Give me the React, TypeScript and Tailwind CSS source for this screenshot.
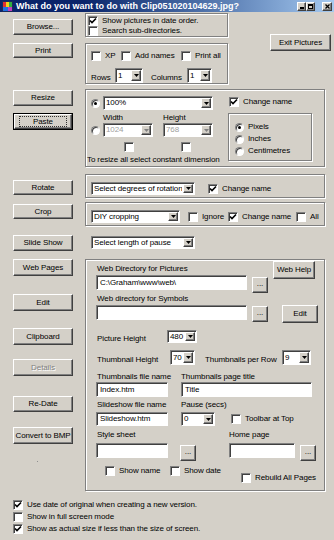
import type { ReactNode } from "react";

const raised =
  "bg-[#d4d0c8] border border-t-white border-l-white border-r-[#404040] border-b-[#404040] shadow-[inset_-1px_-1px_0_#808080]";
const sunken =
  "border border-[#808080] border-r-white border-b-white shadow-[inset_1px_1px_0_#404040]";
const etched = "border border-[#808080] shadow-[inset_1px_1px_0_#fff,1px_1px_0_#fff]";

function Btn({
  children,
  className = "",
  disabled,
}: {
  children: ReactNode;
  className?: string;
  disabled?: boolean;
}) {
  return (
    <div
      className={`flex shrink-0 items-center justify-center whitespace-nowrap ${raised} ${
        disabled ? "text-[#808080] [text-shadow:1px_1px_0_#fff]" : ""
      } ${className}`}
    >
      {children}
    </div>
  );
}

function Box({ checked }: { checked?: boolean }) {
  return (
    <span className={`relative flex h-[10px] w-[10px] shrink-0 bg-white ${sunken}`}>
      {checked && (
        <svg viewBox="0 0 8 8" className="absolute left-0 top-0 h-[8px] w-[8px]">
          <path d="M1 3.5 L3 5.5 L7 1.5" stroke="#000" strokeWidth="1.6" fill="none" />
        </svg>
      )}
    </span>
  );
}

function Check({
  label,
  checked,
  className = "",
}: {
  label: string;
  checked?: boolean;
  className?: string;
}) {
  return (
    <div className={`flex items-center ${className}`}>
      <Box checked={checked} />
      <span className="ml-[4px] whitespace-nowrap">{label}</span>
    </div>
  );
}

function Radio({ checked }: { checked?: boolean }) {
  return (
    <span className={`relative flex h-[9px] w-[9px] shrink-0 rounded-full bg-white ${sunken}`}>
      {checked && <span className="absolute left-[2px] top-[2px] h-[3px] w-[3px] rounded-full bg-black" />}
    </span>
  );
}

function Arrow({ disabled }: { disabled?: boolean }) {
  return (
    <svg viewBox="0 0 5 3" className="h-[3px] w-[5px]">
      <path d="M0 0 H5 L2.5 3 Z" fill={disabled ? "#808080" : "#000"} />
    </svg>
  );
}

function Combo({
  value,
  className = "",
  disabled,
}: {
  value: string;
  className?: string;
  disabled?: boolean;
}) {
  return (
    <div className={`flex shrink-0 bg-white ${sunken} ${className}`}>
      <span
        className={`flex flex-1 items-center overflow-hidden whitespace-nowrap pl-[2px] ${
          disabled ? "text-[#a0a0a0]" : ""
        }`}
      >
        {value}
      </span>
      <span className={`m-px flex w-[10px] shrink-0 items-center justify-center ${raised}`}>
        <Arrow disabled={disabled} />
      </span>
    </div>
  );
}

function Field({ value = "", className = "" }: { value?: string; className?: string }) {
  return (
    <div className={`flex shrink-0 items-center bg-white pl-[3px] whitespace-nowrap ${sunken} ${className}`}>
      {value}
    </div>
  );
}

function Dots({ className = "" }: { className?: string }) {
  return <Btn className={`h-[16px] w-[16px] pb-[2px] ${className}`}>...</Btn>;
}

function TitleBar() {
  return (
    <div className="flex h-[12px] items-center bg-linear-to-r from-[#0a246a] from-25% to-[#a6caf0] pl-[2px] pr-[2px] tracking-normal">
      <svg viewBox="0 0 11 11" className="h-[11px] w-[11px] shrink-0">
        <rect x="0" y="0" width="11" height="11" fill="#1c2a5a" />
        <rect x="1" y="1" width="3" height="5" fill="#e03030" />
        <rect x="4" y="1" width="3" height="5" fill="#f0d020" />
        <rect x="7" y="1" width="3" height="5" fill="#30b040" />
        <rect x="1" y="6" width="5" height="4" fill="#2070e0" />
        <rect x="6" y="6" width="4" height="4" fill="#c040c0" />
      </svg>
      <span className="ml-[3px] whitespace-nowrap text-[9px] font-bold text-white">
        What do you want to do with Clip051020104629.jpg?
      </span>
      <div className="ml-auto flex items-center">
        <span className={`flex h-[9px] w-[9px] items-end justify-center pb-[1px] ${raised}`}>
          <span className="h-[2px] w-[4px] bg-black" />
        </span>
        <span className={`flex h-[9px] w-[9px] items-center justify-center ${raised}`}>
          <span className="h-[5px] w-[5px] border border-t-2 border-black" />
        </span>
        <span className={`ml-[7px] flex h-[9px] w-[10px] items-center justify-center ${raised}`}>
          <svg viewBox="0 0 5 5" className="h-[5px] w-[5px]">
            <path d="M0.5 0.5 L4.5 4.5 M4.5 0.5 L0.5 4.5" stroke="#000" strokeWidth="1.3" />
          </svg>
        </span>
      </div>
    </div>
  );
}

export default function App() {
  return (
    <div className="h-[540px] w-[334px] overflow-hidden bg-[#d4d0c8] font-['Liberation_Sans',Arial,sans-serif] text-[8px] leading-none tracking-[-0.1px] text-black">
      <TitleBar />

      {/* browse / print */}
      <div className="mt-[1px] flex pl-[13px]">
        <div className="flex w-[60px] flex-col">
          <Btn className="mt-[6px] h-[16px]">Browse...</Btn>
          <Btn className="mt-[8px] h-[15px]">Print</Btn>
        </div>
        <div className="ml-[12px] flex w-[143px] flex-col">
          <div className={`flex h-[24px] flex-col pl-[2px] pt-[2px] ${etched}`}>
            <Check className="h-[11px]" checked label="Show pictures in date order." />
            <Check className="h-[11px]" label="Search sub-directories." />
          </div>
          <div className={`mt-[6px] flex h-[41px] flex-col pl-[5px] pt-[7px] ${etched}`}>
            <div className="flex h-[10px] items-center">
              <Check className="w-[30px]" label="XP" />
              <Check className="w-[60px]" label="Add names" />
              <Check label="Print all" />
            </div>
            <div className="mt-[7px] flex h-[15px] items-center">
              <span className="mt-[5px] w-[24px]">Rows</span>
              <Combo className="h-[15px] w-[28px]" value="1" />
              <span className="ml-[8px] mt-[5px] w-[36px]">Columns</span>
              <Combo className="h-[15px] w-[25px]" value="1" />
            </div>
          </div>
        </div>
        <Btn className="ml-[42px] mt-[21px] h-[17px] w-[61px]">Exit Pictures</Btn>
      </div>

      {/* resize */}
      <div className="mt-[5px] flex pl-[13px]">
        <div className="flex w-[60px] flex-col">
          <Btn className="mt-[1px] h-[16px]">Resize</Btn>
          <div className="mt-[7px] flex h-[17px] border border-black">
            <Btn className="flex-1 px-[4px] py-[1px]">
              <span className="flex h-full w-full items-center justify-center border border-dotted border-[#303030]">
                Paste
              </span>
            </Btn>
          </div>
        </div>
        <div className={`ml-[12px] flex h-[78px] w-[240px] ${etched}`}>
          <div className="flex w-[140px] flex-col">
            <div className="mt-[6px] flex h-[14px] items-center pl-[5px]">
              <Radio checked />
              <Combo className="ml-[3px] h-[14px] w-[110px]" value="100%" />
            </div>
            <div className="mt-[2px] flex h-[11px] items-center pl-[17px]">
              <span className="w-[60px]">Width</span>
              <span>Height</span>
            </div>
            <div className="flex h-[14px] items-center pl-[5px]">
              <Radio />
              <Combo disabled className="ml-[3px] h-[14px] w-[50px]" value="1024" />
              <Combo disabled className="ml-[10px] h-[14px] w-[50px]" value="768" />
            </div>
            <div className="mt-[5px] flex h-[10px] pl-[38px]">
              <Box />
              <span className="ml-[47px]">
                <Box />
              </span>
            </div>
            <div className="mt-[4px] whitespace-nowrap pl-[1px]">To resize all select constant dimension</div>
          </div>
          <div className="ml-[2px] flex w-[84px] flex-col">
            <Check className="ml-[1px] mt-[7px] h-[10px]" checked label="Change name" />
            <div className={`mt-[6px] flex h-[48px] flex-col pl-[6px] pt-[7px] ${etched}`}>
              {[
                ["Pixels", true],
                ["Inches", false],
                ["Centimetres", false],
              ].map(([l, c]) => (
                <div key={l as string} className="flex h-[12px] items-center">
                  <Radio checked={c as boolean} />
                  <span className="ml-[4px]">{l as string}</span>
                </div>
              ))}
            </div>
          </div>
        </div>
      </div>

      {/* rotate */}
      <div className="mt-[7px] flex items-start pl-[13px]">
        <Btn className="mt-[6px] h-[15px] w-[60px]">Rotate</Btn>
        <div className={`ml-[12px] flex h-[24px] w-[240px] items-start pl-[5px] pt-[7px] ${etched}`}>
          <Combo className="h-[13px] w-[104px]" value="Select degrees of rotation" />
          <Check className="ml-[13px] h-[13px]" checked label="Change name" />
        </div>
      </div>

      {/* crop */}
      <div className="mt-[4px] flex items-start pl-[13px]">
        <Btn className="mt-[2px] h-[15px] w-[60px]">Crop</Btn>
        <div className={`ml-[12px] flex h-[24px] w-[240px] items-start pl-[5px] pt-[7px] ${etched}`}>
          <Combo className="h-[13px] w-[89px]" value="DIY cropping" />
          <Check className="ml-[8px] h-[13px] w-[40px]" label="Ignore" />
          <Check className="h-[13px] w-[68px]" checked label="Change name" />
          <Check className="h-[13px]" label="All" />
        </div>
      </div>

      {/* slide show */}
      <div className="mt-[9px] flex items-start pl-[13px]">
        <Btn className="h-[16px] w-[60px]">Slide Show</Btn>
        <Combo className="ml-[18px] mt-[1px] h-[13px] w-[104px]" value="Select length of pause" />
      </div>

      {/* web pages */}
      <div className="mt-[8px] flex items-start pl-[13px]">
        <div className="flex w-[60px] flex-col">
          <Btn className="h-[17px]">Web Pages</Btn>
          <Btn className="mt-[18px] h-[17px]">Edit</Btn>
          <Btn className="mt-[17px] h-[17px]">Clipboard</Btn>
          <Btn disabled className="mt-[14px] h-[17px]">
            Details
          </Btn>
          <Btn className="mt-[20px] h-[16px]">Re-Date</Btn>
          <Btn className="mt-[15px] h-[17px]">Convert to BMP</Btn>
          <span className="ml-[24px] mt-[17px] h-[1px] w-[1px] bg-[#909090]" />
        </div>

        <div className={`ml-[12px] flex h-[232px] w-[240px] flex-col pl-[10px] ${etched}`}>
          <div className="flex">
            <div className="flex w-[172px] flex-col">
              <div className="mt-[5px] h-[10px] pl-[1px]">Web Directory for Pictures</div>
              <div className="flex h-[18px] items-start">
                <Field className="h-[15px] w-[151px]" value="C:\Graham\www\web\" />
                <Dots className="ml-[5px] mt-[2px]" />
              </div>
              <div className="mt-[2px] h-[10px] pl-[1px]">Web directory for Symbols</div>
              <div className="flex h-[18px] items-start">
                <Field className="h-[15px] w-[151px]" />
                <Dots className="ml-[5px] mt-[1px]" />
              </div>
            </div>
            <div className="ml-[5px] flex flex-col">
              <Btn className="mt-[1px] h-[18px] w-[42px]">Web Help</Btn>
              <Btn className="ml-[9px] mt-[26px] h-[18px] w-[36px]">Edit</Btn>
            </div>
          </div>

          <div className="mt-[7px] flex h-[13px] items-end">
            <span className="w-[71px] pl-[1px]">Picture Height</span>
            <Combo className="h-[13px] w-[30px]" value="480" />
          </div>

          <div className="mt-[7px] flex h-[15px] items-center">
            <span className="mt-[4px] w-[74px] pl-[1px]">Thumbnail Height</span>
            <Combo className="h-[15px] w-[25px]" value="70" />
            <span className="ml-[10px] mt-[4px] w-[77px]">Thumbnails per Row</span>
            <Combo className="h-[15px] w-[29px]" value="9" />
          </div>

          <div className="mt-[8px] flex h-[9px] items-start">
            <span className="w-[85px] pl-[1px]">Thumbnails file name</span>
            <span>Thumbnails page title</span>
          </div>
          <div className="flex h-[15px]">
            <Field className="h-[15px] w-[72px]" value="Index.htm" />
            <Field className="ml-[13px] h-[15px] w-[131px]" value="Title" />
          </div>

          <div className="mt-[4px] flex h-[10px] items-start">
            <span className="w-[85px] pl-[1px]">Slideshow file name</span>
            <span>Pause (secs)</span>
          </div>
          <div className="mt-[1px] flex h-[14px] items-center">
            <Field className="h-[14px] w-[72px]" value="Slideshow.htm" />
            <Combo className="ml-[13px] h-[14px] w-[34px]" value="0" />
            <Check className="ml-[16px]" label="Toolbar at Top" />
          </div>

          <div className="mt-[5px] flex h-[10px] items-start">
            <span className="w-[133px] pl-[1px]">Style sheet</span>
            <span>Home page</span>
          </div>
          <div className="mt-[2px] flex items-start">
            <Field className="h-[15px] w-[72px]" />
            <Dots className="ml-[12px] mt-[2px]" />
            <Field className="ml-[33px] h-[15px] w-[66px]" />
            <Dots className="ml-[5px] mt-[2px]" />
          </div>

          <div className="mt-[5px] flex items-start">
            <Check className="ml-[9px] h-[10px] w-[65px]" label="Show name" />
            <Check className="h-[10px] w-[71px]" label="Show date" />
            <Check className="mt-[7px] h-[10px]" label="Rebuild All Pages" />
          </div>
        </div>
      </div>

      {/* options */}
      <div className="mt-[8px] flex flex-col pl-[13px]">
        <Check className="h-[12px]" checked label="Use date of original when creating a new version." />
        <Check className="h-[12px]" label="Show in full screen mode" />
        <Check className="h-[12px]" checked label="Show as actual size if less than the size of screen." />
      </div>
    </div>
  );
}
